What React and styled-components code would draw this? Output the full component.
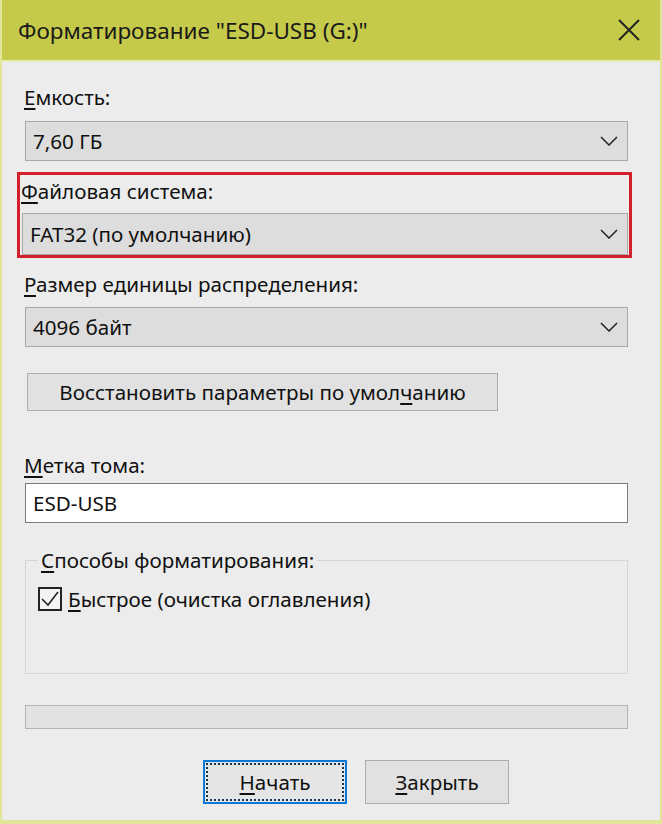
import React from 'react';
import styled, { createGlobalStyle } from 'styled-components';

const GlobalStyle = createGlobalStyle`
    html, body {
        margin: 0;
        padding: 0;
        background: #ececec;
    }
    body {
        font-family: "Noto Sans", "Open Sans", sans-serif;
        color: #111;
    }
`;

const Window = styled.div`
    width: 662px;
    height: 824px;
    box-sizing: border-box;
    display: flex;
    flex-direction: column;
    background: #ececec;
    border-left: 2px solid #e2e69a;
    border-right: 2px solid #e2e69a;
    border-bottom: 4px solid #e2e69a;
    overflow: hidden;
`;

const TitleBar = styled.div`
    height: 60px;
    flex: none;
    margin: 0 -2px;
    display: flex;
    align-items: center;
    justify-content: space-between;
    padding: 0 22px 0 18px;
    background: #c6ca4a;
    border-bottom: 2px solid #e8ebb0;
    font-size: 22.5px;
    color: #1a1a1a;
`;

const Body = styled.div`
    flex: 1;
    display: flex;
    flex-direction: column;
    padding: 22px 32px 0 23px;
`;

const Label = styled.div`
    font-size: 20.6px;
    line-height: 26px;
    height: 26px;
    margin-left: -1px;
    margin-top: ${p => p.top || 0}px;
`;

const Key = styled.span`
    text-decoration: underline;
    text-underline-offset: 3px;
    text-decoration-thickness: 1.5px;
`;

const Select = styled.div`
    height: ${p => p.h || 40}px;
    box-sizing: border-box;
    margin-top: ${p => p.top || 0}px;
    display: flex;
    align-items: center;
    justify-content: space-between;
    padding: 0 9px 0 7px;
    background: #dddddd;
    border: 1.5px solid #a9a9a9;
    font-size: 20.6px;
`;

const Highlight = styled.div`
    margin: 11px -4px 0 -8px;
    border: 3px solid #d21f2c;
    padding: 3px 1px 0 2px;
    display: flex;
    flex-direction: column;
`;

const Button = styled.button`
    font-family: inherit;
    font-size: 20.6px;
    color: #111;
    background: #e1e1e1;
    border: 1.5px solid #adadad;
    height: ${p => p.h || 38}px;
    width: ${p => p.w}px;
    padding: 0;
    box-sizing: border-box;
    cursor: default;
`;

const RestoreButton = styled(Button)`
    margin: 26px 0 0 2px;
    align-self: flex-start;
`;

const PrimaryButton = styled(Button)`
    border: 2px solid #0a78d4;
    background: #e5e5e5;
    outline: 2px dotted #1a3550;
    outline-offset: -5px;
`;

const Input = styled.div`
    margin-top: 5px;
    height: 40px;
    box-sizing: border-box;
    background: #fff;
    border: 1.5px solid #7a7a7a;
    display: flex;
    align-items: center;
    padding-left: 7px;
    font-size: 20.6px;
`;

const Group = styled.fieldset`
    margin: 24px 0 0 0;
    padding: 12px 12px 0 12px;
    height: 127px;
    box-sizing: border-box;
    border: 1.5px solid #d6d6d6;
    font-size: 20.6px;
`;

const Legend = styled.legend`
    padding: 0 3px;
    margin-left: 0;
    line-height: 26px;
`;

const CheckRow = styled.div`
    display: flex;
    align-items: center;
    gap: 6px;
`;

const Box = styled.span`
    width: 24px;
    height: 24px;
    box-sizing: border-box;
    border: 2px solid #222;
    display: flex;
    align-items: center;
    justify-content: center;
    background: #f4f4f4;
`;

const Progress = styled.div`
    margin-top: 31px;
    height: 24px;
    box-sizing: border-box;
    background: #e2e2e2;
    border: 1.5px solid #b4b4b4;
`;

const Actions = styled.div`
    display: flex;
    gap: 18px;
    margin: 31px 0 0 178px;
`;

const Chevron = () => (
    <svg width="18" height="10" viewBox="0 0 18 10">
        <path d="M1 1 L9 9 L17 1" fill="none" stroke="#222" strokeWidth="1.5" />
    </svg>
);

const CloseIcon = () => (
    <svg width="22" height="22" viewBox="0 0 22 22">
        <path d="M1 1 L21 21 M21 1 L1 21" fill="none" stroke="#222" strokeWidth="2" />
    </svg>
);

const Check = () => (
    <svg width="20" height="20" viewBox="0 0 20 20">
        <path d="M2 10 L8 16 L18 3" fill="none" stroke="#222" strokeWidth="1.6" />
    </svg>
);

const App = () => (
    <>
        <GlobalStyle />
        <Window>
            <TitleBar>
                <span>Форматирование "ESD-USB (G:)"</span>
                <CloseIcon />
            </TitleBar>
            <Body>
                <Label><Key>Е</Key>мкость:</Label>
                <Select top={11}>
                    <span>7,60 ГБ</span>
                    <Chevron />
                </Select>

                <Highlight>
                    <Label><Key>Ф</Key>айловая система:</Label>
                    <Select top={9} h={42}>
                        <span>FAT32 (по умолчанию)</span>
                        <Chevron />
                    </Select>
                </Highlight>

                <Label top={13}><Key>Р</Key>азмер единицы распределения:</Label>
                <Select top={10}>
                    <span>4096 байт</span>
                    <Chevron />
                </Select>

                <RestoreButton w={471}>
                    Восстановить параметры по умол<Key>ч</Key>анию
                </RestoreButton>

                <Label top={41}><Key>М</Key>етка тома:</Label>
                <Input>ESD-USB</Input>

                <Group>
                    <Legend><Key>С</Key>пособы форматирования:</Legend>
                    <CheckRow>
                        <Box><Check /></Box>
                        <span><Key>Б</Key>ыстрое (очистка оглавления)</span>
                    </CheckRow>
                </Group>

                <Progress />

                <Actions>
                    <PrimaryButton w={144} h={44}><Key>Н</Key>ачать</PrimaryButton>
                    <Button w={144} h={44}><Key>З</Key>акрыть</Button>
                </Actions>
            </Body>
        </Window>
    </>
);

export default App;
